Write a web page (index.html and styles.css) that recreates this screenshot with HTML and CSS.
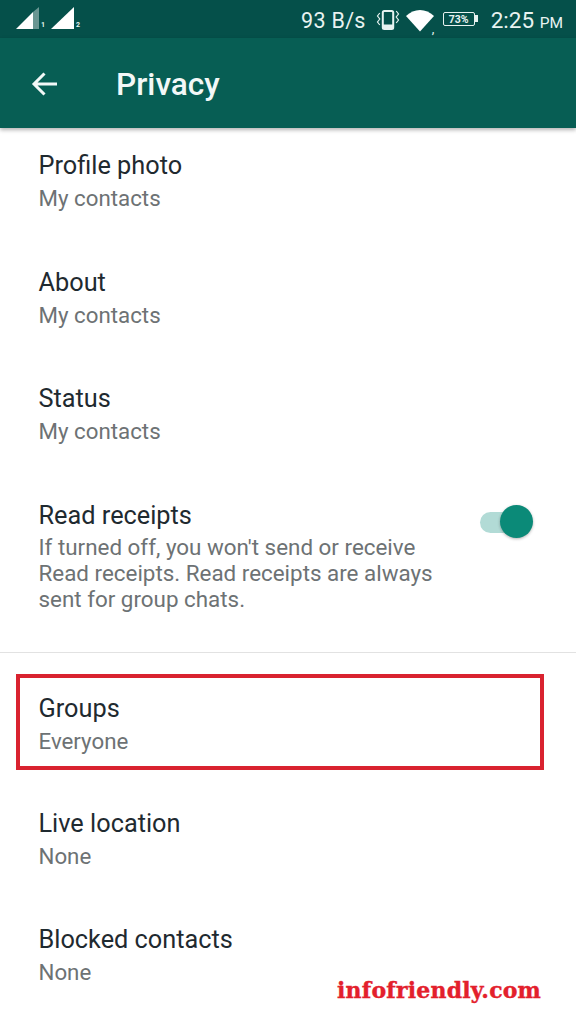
FILE: index.html
```html
<!DOCTYPE html>
<html lang="en">
<head>
<meta charset="utf-8">
<title>Privacy</title>
<link rel="stylesheet" href="styles.css">
</head>
<body>
<div class="screen">
  <div class="statusbar">
    <div class="sims">
      <svg class="signal" width="24" height="23" viewBox="0 0 24 23"><path class="dim" d="M17 5 L23 0 V22 H17 Z"/><path d="M0 22 L17 5 V22 Z"/></svg>
      <span class="simnum">1</span>
      <svg class="signal second" width="25" height="23" viewBox="0 0 25 23"><path d="M1 22 L24 0 V22 Z"/></svg>
      <span class="simnum">2</span>
    </div>
    <div class="status-right">
      <span class="speed">93 B/s</span>
      <svg class="vibrate" width="24" height="22" viewBox="0 0 24 22"><rect class="line" x="6.8" y="2" width="10.4" height="18" rx="1.5"/><rect x="6.8" y="15.5" width="10.4" height="4.5"/><path class="line thin" d="M3.8 4 L1.5 7 L3.8 10 L1.5 13 L3.8 16 M20.2 2 L22.5 5 L20.2 8 L22.5 11 L20.2 14"/></svg>
      <svg class="wifi" width="28" height="24" viewBox="0 0 28 24"><path d="M0 8 C8 0 20 0 28 8 L14 23.5 Z"/></svg>
      <span class="comma">,</span>
      <div class="battery"><span class="battery-level">73%</span></div>
      <span class="clock">2:25 <small>PM</small></span>
    </div>
  </div>
  <header class="appbar">
    <svg class="back" width="28" height="26" viewBox="0 0 28 26"><path d="M26 13 H3 M13.5 2.5 L3 13 L13.5 23.5"/></svg>
    <h1 class="title">Privacy</h1>
  </header>
  <main class="settings">
    <section class="group group-top">
      <div class="row"><div class="row-title">Profile photo</div><div class="row-sub">My contacts</div></div>
      <div class="row"><div class="row-title">About</div><div class="row-sub">My contacts</div></div>
      <div class="row"><div class="row-title">Status</div><div class="row-sub">My contacts</div></div>
      <div class="row row-toggle">
        <div class="toggle-text">
          <div class="row-title">Read receipts</div>
          <div class="row-desc">If turned off, you won't send or receive Read receipts. Read receipts are always sent for group chats.</div>
        </div>
        <div class="switch"><span class="switch-track"></span><span class="switch-thumb"></span></div>
      </div>
    </section>
    <section class="group group-bottom">
      <div class="row row-marked"><div class="row-title">Groups</div><div class="row-sub">Everyone</div></div>
      <div class="row"><div class="row-title">Live location</div><div class="row-sub">None</div></div>
      <div class="row"><div class="row-title">Blocked contacts</div><div class="row-sub">None</div></div>
    </section>
  </main>
  <div class="watermark">infofriendly.com</div>
</div>
</body>
</html>
```
FILE: styles.css
```css
*, *::before, *::after { box-sizing: border-box; }
html, body { margin: 0; padding: 0; }
body { background: #fff; font-family: Roboto, "Noto Sans", sans-serif; }
.screen { position: relative; width: 576px; height: 1024px; overflow: hidden; background: #fff; }

.statusbar { height: 38px; background: #05504a; color: #e8f3f1; display: flex; justify-content: space-between; align-items: flex-start; padding: 0 13px 0 16px; }
.sims { display: flex; align-items: flex-end; height: 30px; }
.signal { display: block; fill: #fff; }
.signal .dim { fill: #fff; opacity: .4; }
.second { margin-left: 5px; }
.simnum { font-size: 7px; font-weight: 700; line-height: 9px; margin-left: 1px; }
.status-right { display: flex; align-items: center; height: 40px; }
.speed { font-size: 21.5px; letter-spacing: .3px; }
.vibrate { margin-left: 10px; fill: #e8f3f1; }
.vibrate .line { fill: none; stroke: #e8f3f1; stroke-width: 2; }
.vibrate .thin { stroke-width: 1.2; }
.wifi { margin-left: 6px; fill: #fff; }
.comma { font-size: 13px; width: 4px; align-self: flex-end; line-height: 22px; margin-left: -2px; }
.battery { position: relative; width: 32px; height: 14px; border: 1.5px solid #e8f3f1; border-radius: 2px; margin-left: 7px; margin-bottom: 2px; display: flex; align-items: center; justify-content: center; }
.battery::after { content: ""; position: absolute; right: -4.5px; top: 2px; width: 3px; height: 7px; background: #e8f3f1; }
.battery-level { font-size: 10.5px; font-weight: 700; line-height: 11px; }
.clock { font-size: 22.5px; margin-left: 16px; }
.clock small { font-size: 15.5px; }

.appbar { height: 90px; background: #075e54; display: flex; align-items: center; padding: 2px 0 0 31px; box-shadow: 0 2px 4px rgba(0,0,0,.3); position: relative; }
.back { fill: none; stroke: #f2f8f7; stroke-width: 3; display: block; }
.title { margin: 2px 0 0 57px; font-size: 31.6px; font-weight: 500; color: #f2f8f7; line-height: 36px; }

.group-top { border-bottom: 1px solid #e2e2e2; padding-bottom: 9px; }
.group-bottom { padding-top: 18px; }
.row { padding: 21px 38.5px 29.5px; }
.row-title { font-size: 25.3px; line-height: 33px; color: #1f2a30; }
.row-sub { font-size: 22.3px; line-height: 32px; margin-bottom: 1px; color: #6d7274; }
.row-toggle { display: flex; justify-content: space-between; padding-right: 43px; padding-bottom: 31px; }
.toggle-text { width: 410px; }
.row-desc { font-size: 22.4px; line-height: 26px; color: #6d7274; margin-top: 2px; }
.switch { position: relative; width: 53px; height: 35px; margin-top: 6px; flex: none; }
.switch-track { position: absolute; left: 0; top: 7px; width: 36px; height: 21px; border-radius: 10.5px; background: #b2dbd6; }
.switch-thumb { position: absolute; right: 0; top: 0; width: 33px; height: 33px; border-radius: 50%; background: #0b8a78; box-shadow: 0 1px 3px rgba(0,0,0,.3); }
.row-marked { position: relative; padding-bottom: 28px; }
.row-marked::after { content: ""; position: absolute; left: 16px; top: 3px; width: 528px; height: 96px; border: 4px solid #d9222f; }
.watermark { position: absolute; left: 337px; top: 974px; font-family: "DejaVu Serif", serif; font-weight: 700; font-size: 22px; letter-spacing: .2px; color: #e3202c; line-height: 32px; -webkit-text-stroke: .4px #e3202c; }
```
